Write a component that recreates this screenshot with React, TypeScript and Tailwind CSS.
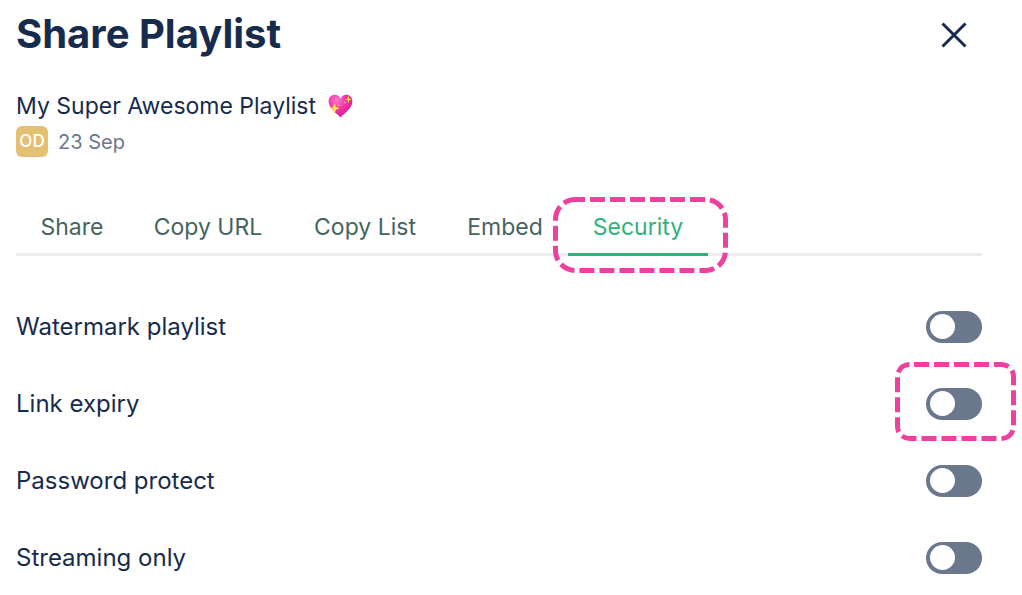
import { useState } from "react";

const tabs = [
  { name: "Share", width: "w-28" },
  { name: "Copy URL", width: "w-40" },
  { name: "Copy List", width: "w-[154px]" },
  { name: "Embed", width: "w-[126px]" },
  { name: "Security", width: "w-[140px]" },
];

const options = ["Watermark playlist", "Link expiry", "Password protect", "Streaming only"];

function SparklingHeart() {
  return (
    <svg role="img" aria-label="Sparkling heart" viewBox="0 0 25 24" className="h-6 w-[25px] shrink-0">
      <defs>
        <radialGradient id="heart" cx="0.35" cy="0.25" r="0.8">
          <stop offset="0" stopColor="#ff7cc8" />
          <stop offset="0.45" stopColor="#f536ac" />
          <stop offset="1" stopColor="#d31590" />
        </radialGradient>
      </defs>
      <path
        d="M12.5 23.4C10.4 20.6 1 15 .6 7.7.4 3.700 3 .8 6.600.8c2.700 0 4.800 1.600 5.900 3.900C13.600 2.400 15.700.8 18.400.8c3.600 0 6.200 2.900 6 6.900C24 15 14.600 20.600 12.500 23.400Z"
        fill="url(#heart)"
      />
      <path d="M6.500 9.300 8 13l3.700 1.300L8 15.800l-1.500 3.700L5 15.800l-3.700-1.500L5 13Z" fill="#ffe04a" />
      <path d="m20.400 1.500.9 2.900 2.700.9-2.700 1-.9 2.900-.9-2.900-2.700-1 2.700-.9Z" fill="#ffe04a" />
      <circle cx="17" cy="8.400" r=".9" fill="#ffc05a" />
      <circle cx="10.600" cy="11.400" r=".8" fill="#ffc05a" />
    </svg>
  );
}

export default function App() {
  const [active, setActive] = useState("Security");

  return (
    <main className="pr-10 pb-5 pl-4 font-['Inter',sans-serif] text-[23px] text-[#172b4d]">
      <header className="flex h-[70px] items-center justify-between">
        <h1 className="pb-0.5 text-[40px] leading-none font-bold">Share Playlist</h1>
        <button type="button" aria-label="Close" className="flex h-10 w-14 items-center justify-center">
          <svg viewBox="0 0 26 26" className="size-[26px]" fill="none" stroke="currentColor" strokeWidth="3">
            <path d="M1.500 1.500 24.500 24.500M24.500 1.500 1.500 24.500" />
          </svg>
        </button>
      </header>

      <section className="pt-5">
        <h2 className="flex h-9 items-center gap-3 pb-1">
          My Super Awesome Playlist
          <SparklingHeart />
        </h2>
        <div className="flex items-center gap-2.5">
          <span className="flex h-[31px] w-8 items-center justify-center rounded-md bg-[#e4c073] text-[17px] font-medium text-white">
            OD
          </span>
          <span className="text-xl text-[#6b778c]">23 Sep</span>
        </div>
      </section>

      <div role="tablist" className="mt-11 flex h-[55px] border-b-[3px] border-[#ebecf0]">
        {tabs.map(({ name, width }) => (
          <div key={name} className={`relative shrink-0 ${width}`}>
            <button
              type="button"
              role="tab"
              aria-selected={active === name}
              onClick={() => setActive(name)}
              className={`-mb-[3px] flex h-[55px] w-full items-center justify-center border-b-[3px] whitespace-nowrap ${
                active === name ? "border-[#2fb37b] text-[#2fb37b]" : "border-transparent text-[#44645f]"
              }`}
            >
              {name}
            </button>
            {name === "Security" && (
              <svg
                aria-hidden="true"
                viewBox="0 0 175 76"
                className="pointer-events-none absolute -top-1 -left-[15px] h-[76px] w-[175px]"
                fill="none"
              >
                <rect x="2.500" y="2.500" width="170" height="71" rx="20" stroke="#ed409f" strokeWidth="5" strokeDasharray="15 5" strokeDashoffset="5.500" />
              </svg>
            )}
          </div>
        ))}
      </div>

      <ul className="flex flex-col pt-8 text-2xl">
        {options.map((option) => (
          <li key={option} className="relative h-[77px]">
            <label className="flex h-[77px] items-center justify-between">
              {option}
              <input
                type="checkbox"
                role="switch"
                className="flex h-8 w-14 shrink-0 appearance-none items-center rounded-full bg-[#6b778c] px-1 before:size-[25px] before:rounded-full before:bg-white checked:justify-end checked:bg-[#2fb37b]"
              />
            </label>
            {option === "Link expiry" && (
              <svg
                aria-hidden="true"
                viewBox="0 0 121 79"
                className="pointer-events-none absolute -top-[3px] -right-[34px] h-[79px] w-[121px]"
                fill="none"
              >
                <rect x="2.500" y="2.500" width="116" height="74" rx="12" stroke="#ed409f" strokeWidth="5" strokeDasharray="15 5" strokeDashoffset="15.500" />
              </svg>
            )}
          </li>
        ))}
      </ul>
    </main>
  );
}
